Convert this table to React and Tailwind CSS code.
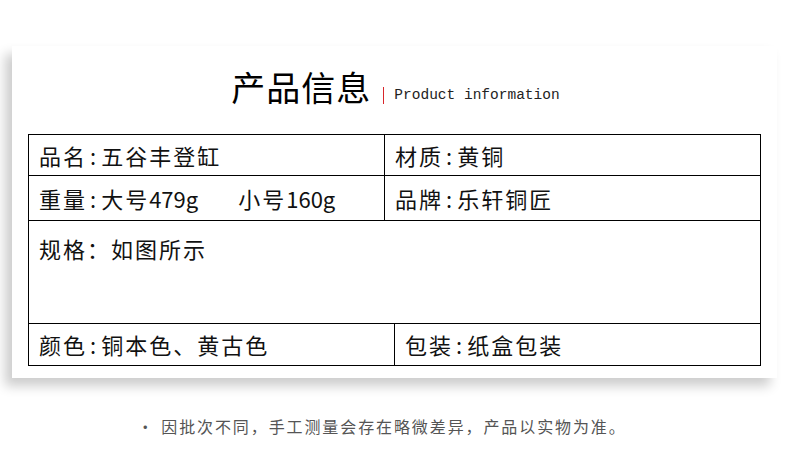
function Colon() {
    return <span className="mx-[3px]">:</span>;
}

export default function App() {
    const cjk = "font-['Noto_Sans_CJK_SC','Noto_Sans',sans-serif]";

    return (
        <div className={`w-[790px] h-[469px] bg-white overflow-hidden ${cjk}`}>
            <div className="ml-[12px] mt-[46px] w-[765px] h-[332px] bg-white shadow-[-7px_8px_11px_rgba(0,0,0,0.2)] pt-[20px] px-[16px]">
                {/* title */}
                <div className="flex items-end justify-center h-[42px] pl-[2px]">
                    <span className="text-[34px] leading-[42px] text-black tracking-[1px]">
                        产品信息
                    </span>
                    <span className="ml-[12px] mb-[4px] w-px h-[17px] bg-[#d8262b]"></span>
                    <span className="ml-[10px] mb-[4px] text-[14.5px] leading-[17px] text-[#222] font-['Liberation_Mono',monospace]">
                        Product information
                    </span>
                </div>

                {/* table */}
                <div className="mt-[26px] w-[733px] border border-black text-[22px] text-[#111] tracking-[2px]">
                    <div className="flex h-[41px] border-b border-black">
                        <div className="w-[356px] border-r border-black pl-[10px] flex items-center">
                            品名<Colon />五谷丰登缸
                        </div>
                        <div className="flex-1 pl-[10px] flex items-center">
                            材质<Colon />黄铜
                        </div>
                    </div>
                    <div className="flex h-[45px] border-b border-black">
                        <div className="w-[356px] border-r border-black pl-[10px] flex items-center">
                            重量<Colon />大号<span className="tracking-normal">479g</span>
                            <span className="ml-[40px]">小号<span className="tracking-normal">160g</span></span>
                        </div>
                        <div className="flex-1 pl-[10px] flex items-center">
                            品牌<Colon />乐轩铜匠
                        </div>
                    </div>
                    <div className="h-[103px] border-b border-black pl-[10px] pt-[11px]">
                        规格：如图所示
                    </div>
                    <div className="flex h-[41px]">
                        <div className="w-[366px] border-r border-black pl-[10px] flex items-center">
                            颜色<Colon />铜本色、黄古色
                        </div>
                        <div className="flex-1 pl-[10px] flex items-center">
                            包装<Colon />纸盒包装
                        </div>
                    </div>
                </div>
            </div>

            {/* note */}
            <div className="mt-[37px] flex justify-center pr-[26px] text-[16px] leading-[22px] text-[#555] tracking-[1.9px]">
                <span className="mr-[6px]">•</span>
                因批次不同，手工测量会存在略微差异，产品以实物为准。
            </div>
        </div>
    );
}
